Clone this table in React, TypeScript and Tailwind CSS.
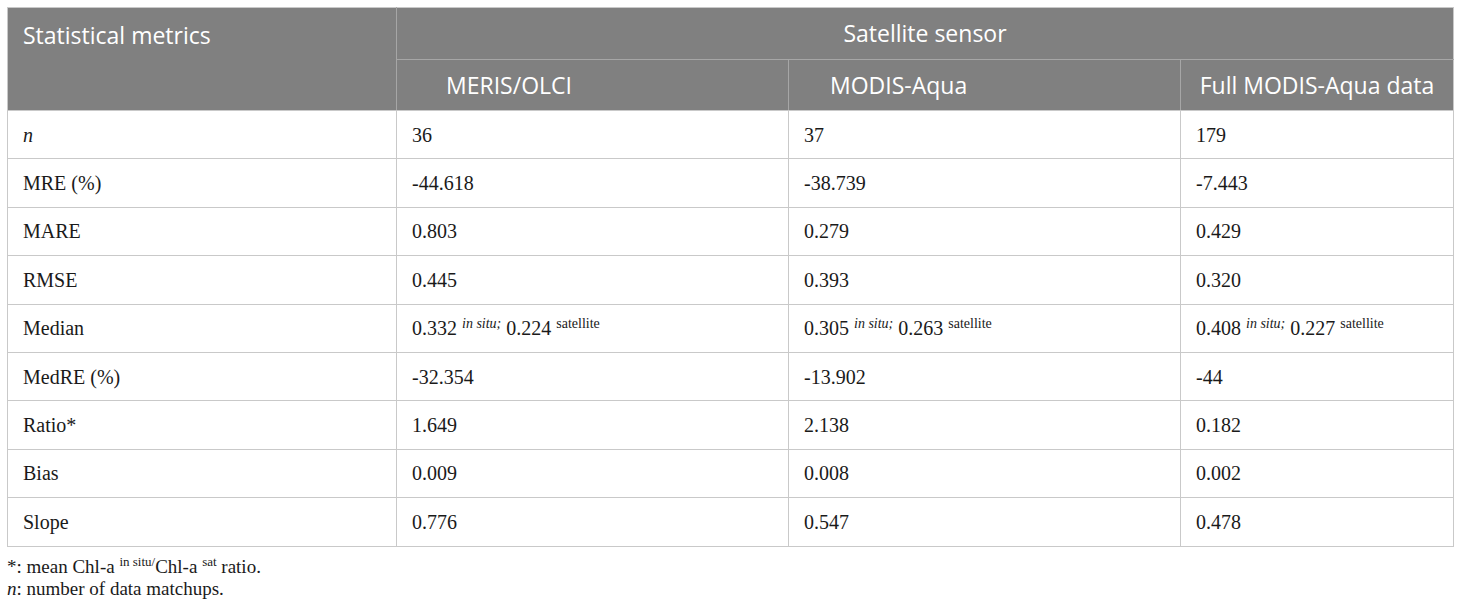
import React from 'react';

const rows: { label: React.ReactNode; values: React.ReactNode[] }[] = [
  { label: <i>n</i>, values: ['36', '37', '179'] },
  { label: 'MRE (%)', values: ['-44.618', '-38.739', '-7.443'] },
  { label: 'MARE', values: ['0.803', '0.279', '0.429'] },
  { label: 'RMSE', values: ['0.445', '0.393', '0.320'] },
  {
    label: 'Median',
    values: [
      ['0.332', '0.224'],
      ['0.305', '0.263'],
      ['0.408', '0.227'],
    ].map(([a, b]) => (
      <>
        {a} <sup className="text-[14px]"><i>in situ;</i></sup> {b} <sup className="text-[14px]">satellite</sup>
      </>
    )),
  },
  { label: 'MedRE (%)', values: ['-32.354', '-13.902', '-44'] },
  { label: 'Ratio*', values: ['1.649', '2.138', '0.182'] },
  { label: 'Bias', values: ['0.009', '0.008', '0.002'] },
  { label: 'Slope', values: ['0.776', '0.547', '0.478'] },
];

function App() {
  return (
    <div className="min-h-screen bg-white px-[7px] pt-[7px]">
      <table className="w-[1446px] table-fixed border-collapse">
        <colgroup>
          <col className="w-[389px]" />
          <col className="w-[392px]" />
          <col className="w-[392px]" />
          <col className="w-[273px]" />
        </colgroup>
        <thead className="bg-[#808080] text-white font-['Open_Sans',sans-serif] text-[23px]">
          <tr className="h-[52px]">
            <th rowSpan={2} className="border border-[#c9c9c9] border-r-[#a6a6a6] px-[15px] pt-[10px] text-left align-top font-normal">
              Statistical metrics
            </th>
            <th colSpan={3} className="border border-[#c9c9c9] border-b-[#a6a6a6] text-center font-normal">
              Satellite sensor
            </th>
          </tr>
          <tr className="h-[51px]">
            <th className="border border-[#c9c9c9] border-r-[#a6a6a6] border-t-[#a6a6a6] pl-[49px] text-left font-normal">MERIS/OLCI</th>
            <th className="border border-[#c9c9c9] border-r-[#a6a6a6] border-t-[#a6a6a6] pl-[41px] text-left font-normal">MODIS-Aqua</th>
            <th className="border border-[#c9c9c9] border-t-[#a6a6a6] text-center font-normal">Full MODIS-Aqua data</th>
          </tr>
        </thead>
        <tbody className="font-['Liberation_Serif',serif] text-[20px] text-[#1a1a1a]">
          {rows.map((r, i) => (
            <tr key={i} className="h-[48.4px]">
              <td className="border border-[#c9c9c9] px-[15px]">{r.label}</td>
              {r.values.map((v, j) => (
                <td key={j} className="border border-[#c9c9c9] px-[15px] whitespace-nowrap">
                  {v}
                </td>
              ))}
            </tr>
          ))}
        </tbody>
      </table>
      <div className="mt-[9px] font-['Liberation_Serif',serif] text-[19px] leading-[22px] text-[#1a1a1a]">
        <p>
          *: mean Chl-a <sup className="text-[13px]">in situ/</sup>Chl-a <sup className="text-[13px]">sat</sup> ratio.
        </p>
        <p>
          <i>n</i>: number of data matchups.
        </p>
      </div>
    </div>
  );
}

export default App;
